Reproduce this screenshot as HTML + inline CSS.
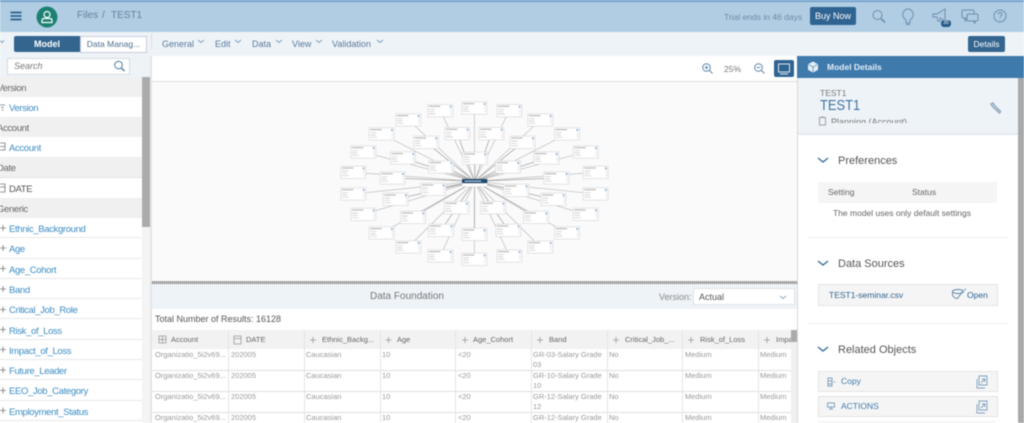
<!DOCTYPE html>
<html><head><meta charset="utf-8"><style>
html,body{margin:0;padding:0;background:#fff}
#w{position:relative;width:1024px;height:423px;overflow:hidden;font-family:"Liberation Sans",sans-serif;color:#555;filter:blur(.45px);background:#fff}
#w div,#w svg{position:absolute}
.t{white-space:nowrap;line-height:12px}
.h{left:0;width:142px;height:20px;background:#f0f0f0;border-bottom:1px solid #e2e2e2}
.h span,.i span{position:absolute;line-height:12px;font-size:9.5px;white-space:nowrap;letter-spacing:-.35px}
.h span{left:-3px;top:5.5px;color:#666}
.i{left:0;width:142px;height:19.3px;background:#fff;border-bottom:1px solid #e8e8e8}
.i span{left:9px;top:6px;color:#3d8dc4}
.m{font-size:9px;color:#5a7a99}
.c{font-size:7.5px;color:#999;line-height:10px}
.hc{font-size:7.5px;color:#666}
.v{width:1px;background:#e4e4e4}
.r{left:152px;width:639px;height:1px;background:#e0e0e0}
</style></head><body><div id="w">
<div style="left:0;top:0;width:1024px;height:32px;background:#b1cde3"></div>
<div style="left:0;top:0;width:1024px;height:1.5px;background:#6d9fcc"></div>
<svg style="left:8px;top:9px" width="16" height="14"><path d="M2.5 3.5h11M2.5 7h11M2.5 10.500h11" stroke="#2d5f8d" stroke-width="1.700"/></svg>
<svg style="left:36px;top:6px" width="22" height="22"><circle cx="11" cy="11" r="10.500" fill="#1d8172"/><circle cx="11" cy="8.500" r="3" fill="none" stroke="#fff" stroke-width="1.200"/><path d="M6 16.500v-2q0-2 2-2h6q2 0 2 2v2z" fill="none" stroke="#fff" stroke-width="1.200"/></svg>
<div class="t" style="left:77px;top:10px;font-size:10px;color:#62809c">Files</div>
<div class="t" style="left:102px;top:10px;font-size:10px;color:#62809c">/</div>
<div class="t" style="left:111px;top:10px;font-size:10px;color:#62809c">TEST1</div>
<div class="t" style="left:724px;top:11px;font-size:8.500px;color:#6f8ca8">Trial ends in 46 days</div>
<div style="left:810px;top:7px;width:46px;height:18px;background:#2f6391;border-radius:2px;color:#fff;font-size:9px;line-height:18px;text-align:center">Buy Now</div>
<svg style="left:868px;top:5px" width="150" height="24" fill="none" stroke="#6d8fae" stroke-width="1"><circle cx="9.500" cy="10" r="4.500"/><path d="M13 13.500l4 4" stroke-width="1.600"/><path d="M38 15q-4-3-3-6a5 5 0 0 1 10 0q1 3-3 6v3h-4z"/><path d="M38 19.500h4"/><path d="M65 9h4l8-5v12l-3-2-2-1v3h-2l-1-4h-4z"/><rect x="94" y="5" width="12" height="8" rx="1.500"/><path d="M97 13v3l3-3"/><rect x="99" y="9" width="11" height="7" rx="1.500" fill="#b1cde3"/><path d="M107 16v2l-2-2"/><circle cx="132" cy="11" r="6"/><path d="M130 9.500q.3-2 2-2t2 1.700q0 1-1 1.600t-1 1.500M132 14v.8"/></svg>
<div style="left:941px;top:20px;width:10px;height:6.500px;background:#265a88;border-radius:3px;color:#fff;font-size:5px;line-height:7px;text-align:center">30</div>
<div style="left:0;top:32px;width:1024px;height:24px;background:#eef3f8"></div>
<div style="left:14px;top:36px;width:66px;height:16px;background:#34658f;border-radius:2px 0 0 2px;color:#fff;font-size:9px;font-weight:bold;line-height:16px;text-align:center">Model</div>
<div style="left:80px;top:36px;width:65px;height:15px;background:#fff;border:.5px solid #ccd;color:#4d6f8f;font-size:8.500px;line-height:15px;text-align:center">Data Manag...</div>
<div style="left:151px;top:34px;width:1px;height:15px;background:#d8dee4"></div>
<div class="t m" style="left:162px;top:38px">General</div>
<div class="t m" style="left:215px;top:38px">Edit</div>
<div class="t m" style="left:252px;top:38px">Data</div>
<div class="t m" style="left:292px;top:38px">View</div>
<div class="t m" style="left:332px;top:38px">Validation</div>
<svg style="left:0;top:32px" width="400" height="24" fill="none" stroke="#7d9ab5" stroke-width=".9"><path d="M-1 8l3 2.500 2-2M198 8l3 2.500 3-2.500M235 8l3 2.500 3-2.500M276 8l3 2.500 3-2.500M316 8l3 2.500 3-2.500M377 8l3 2.500 3-2.500"/></svg>
<div style="left:968px;top:36px;width:37px;height:16px;background:#34658f;border-radius:2px;color:#fff;font-size:8.500px;line-height:16px;text-align:center">Details</div>

<div style="left:0;top:56px;width:150px;height:21px;background:#eef3f8"></div>
<div style="left:7px;top:58px;width:121px;height:15px;background:#fff;border:1px solid #d5dbe0"></div>
<div class="t" style="left:14px;top:60px;font-size:9px;font-style:italic;color:#777">Search</div>
<svg style="left:112px;top:59px" width="16" height="14" fill="none" stroke="#4b7aa5" stroke-width="1"><circle cx="6.500" cy="6" r="3.800"/><path d="M9.500 9l3 3" stroke-width="1.400"/></svg>
<div class="h" style="top:77px"><span>Version</span></div>
<div class="i" style="top:97px;height:20px"><span>Version</span></div>
<div class="h" style="top:117px"><span>Account</span></div>
<div class="i" style="top:137px;height:20px"><span>Account</span></div>
<div class="h" style="top:157px"><span>Date</span></div>
<div class="i" style="top:178px;height:20px"><span style="color:#555">DATE</span></div>
<div class="h" style="top:198px"><span>Generic</span></div>
<div class="i" style="top:218px"><span>Ethnic_Background</span></div>
<div class="i" style="top:238.300px"><span>Age</span></div>
<div class="i" style="top:258.600px"><span>Age_Cohort</span></div>
<div class="i" style="top:278.900px"><span>Band</span></div>
<div class="i" style="top:299.200px"><span>Critical_Job_Role</span></div>
<div class="i" style="top:319.500px"><span>Risk_of_Loss</span></div>
<div class="i" style="top:339.800px"><span>Impact_of_Loss</span></div>
<div class="i" style="top:360.100px"><span>Future_Leader</span></div>
<div class="i" style="top:380.400px"><span>EEO_Job_Category</span></div>
<div class="i" style="top:400.700px"><span>Employment_Status</span></div>
<svg style="left:0;top:97px" width="10" height="326" fill="none" stroke="#777" stroke-width=".8"><path d="M0 8h5M1 10.500h3M1.500 13h2M0 46h5v7h-5M0 49.500h5M0 87h5v8h-5M0 90h5"/><g transform="translate(0 5.500)"><path d="M0 125.500h6M3 122.500v6M0 145.500h6M3 142.500v6M0 166h6M3 163v6M0 186.500h6M3 183.500v6M0 207h6M3 204v6M0 227h6M3 224v6M0 247h6M3 244v6M0 267.500h6M3 264.500v6M0 288h6M3 285v6M0 308h6M3 305v6"/></g></svg>
<div style="left:142px;top:77px;width:8px;height:150px;background:#ababab"></div>
<div style="left:142px;top:227px;width:8px;height:196px;background:#f4f4f4"></div>
<div style="left:150px;top:56px;width:2px;height:367px;background:#e3e6e9"></div>

<div style="left:152px;top:81px;width:645px;height:1px;background:#dcdcdc"></div>
<div style="left:152px;top:82px;width:645px;height:198px;background:#fafafa"></div>
<svg style="left:700px;top:60px" width="70" height="16" fill="none" stroke="#5b86ab" stroke-width="1"><circle cx="6.500" cy="7.500" r="3.800"/><path d="M9.500 10.500l3 3M4.800 7.500h3.400M6.500 5.800v3.400"/><circle cx="58.500" cy="7.500" r="3.800"/><path d="M61.500 10.500l3 3M56.800 7.500h3.400"/></svg>
<div class="t" style="left:724px;top:63px;font-size:8.500px;color:#777">25%</div>
<div style="left:774px;top:60px;width:20px;height:17px;background:#2f6391;border-radius:2px"></div>
<svg style="left:774px;top:60px" width="20" height="17" fill="none" stroke="#dfe8f0" stroke-width="1"><rect x="4.500" y="4" width="11" height="8"/><path d="M6 14h8"/></svg>

<svg style="left:330px;top:90px" width="300" height="190" viewBox="0 0 900 570">
<defs><g id="b"><rect x=".5" y=".5" width="75" height="37" fill="#fff" stroke="#d8d8d8" stroke-width="2"/><rect x="4" y="4" width="34" height="4" fill="#c0c0c0"/><rect x="66" y="4" width="6" height="6" fill="#9dbbd6"/><path d="M4 15h18M4 22h16M4 29h20M68 15h4M68 22h4M68 29h4" stroke="#c4c4c4" stroke-width="2"/></g></defs>
<g stroke="#b4b4b4" stroke-width="1.800" fill="none">
<path d="M434 274L433 54M434 274L331 62M434 274L538 62M434 274L235 90M434 274L631 90M434 274L155 132M434 274L711 132M434 274L100 186M434 274L767 186M434 274L70 247M434 274L797 247M434 274L70 312M434 274L797 312M434 274L100 373M434 274L767 373M434 274L155 429M434 274L711 429M434 274L235 471M434 274L631 471M434 274L331 498M434 274L538 498M434 274L433 508"/>
</g>
<g stroke="#a4a4a4" stroke-width="2.200" fill="none"><path d="M434 274L382 131M434 274L484 131M434 274L288 157M434 274L578 157M434 274L219 204M434 274L649 204M434 274L188 264M434 274L679 264M434 274L197 328M434 274L670 328M434 274L249 382M434 274L618 382M434 274L333 421M434 274L535 421M434 274L433 433M434 274L380 353M434 274L489 353M434 274L310 298M434 274L559 301M434 274L333 231M434 274L534 231M434 274L435 205"/></g>
<use href="#b" x="395" y="35"/><use href="#b" x="293" y="43"/><use href="#b" x="500" y="43"/><use href="#b" x="197" y="71"/><use href="#b" x="593" y="71"/><use href="#b" x="117" y="113"/><use href="#b" x="673" y="113"/><use href="#b" x="62" y="167"/><use href="#b" x="729" y="167"/><use href="#b" x="32" y="228"/><use href="#b" x="759" y="228"/><use href="#b" x="32" y="293"/><use href="#b" x="759" y="293"/><use href="#b" x="62" y="354"/><use href="#b" x="729" y="354"/><use href="#b" x="117" y="410"/><use href="#b" x="673" y="410"/><use href="#b" x="197" y="452"/><use href="#b" x="593" y="452"/><use href="#b" x="293" y="479"/><use href="#b" x="500" y="479"/><use href="#b" x="395" y="489"/>
<use href="#b" x="344" y="112"/><use href="#b" x="446" y="112"/><use href="#b" x="250" y="138"/><use href="#b" x="540" y="138"/><use href="#b" x="181" y="185"/><use href="#b" x="611" y="185"/><use href="#b" x="150" y="245"/><use href="#b" x="641" y="245"/><use href="#b" x="159" y="309"/><use href="#b" x="632" y="309"/><use href="#b" x="211" y="363"/><use href="#b" x="580" y="363"/><use href="#b" x="295" y="402"/><use href="#b" x="497" y="402"/><use href="#b" x="395" y="414"/><use href="#b" x="342" y="334"/><use href="#b" x="451" y="334"/><use href="#b" x="272" y="279"/><use href="#b" x="521" y="282"/><use href="#b" x="295" y="212"/><use href="#b" x="496" y="212"/><use href="#b" x="397" y="186"/>
<rect x="396" y="267" width="76" height="13" fill="#1f4a6e"/><rect x="396" y="280" width="76" height="10" fill="#fff" stroke="#ccc"/><rect x="404" y="272" width="50" height="3" fill="#cfdbe6"/>
</svg>

<div style="left:152px;top:281px;width:645px;height:3px;background:repeating-linear-gradient(90deg,#888 0 1px,#ccc 1px 2px)"></div>
<div style="left:152px;top:284px;width:645px;height:25px;background:#eef3f8"></div>
<div class="t" style="left:370px;top:290.500px;font-size:10px;color:#777">Data Foundation</div>
<div class="t" style="left:659px;top:291px;font-size:9px;color:#888">Version:</div>
<div style="left:693px;top:288px;width:100px;height:15px;background:#fff;border:1px solid #dde2e6"></div>
<div class="t" style="left:699px;top:291px;font-size:9px;color:#555">Actual</div>
<svg style="left:778px;top:292px" width="12" height="10" fill="none" stroke="#8aa5bd"><path d="M2 4l3 2.500 3-2.500"/></svg>
<div class="t" style="left:155px;top:313px;font-size:9px;color:#555">Total Number of Results: 16128</div>
<div style="left:152px;top:330px;width:639px;height:19px;background:#f2f2f2"></div>
<div class="t hc" style="left:171px;top:334px">Account</div>
<div class="t hc" style="left:246px;top:334px">DATE</div>
<div class="t hc" style="left:322px;top:334px">Ethnic_Backg...</div>
<div class="t hc" style="left:397px;top:334px">Age</div>
<div class="t hc" style="left:473px;top:334px">Age_Cohort</div>
<div class="t hc" style="left:549px;top:334px">Band</div>
<div class="t hc" style="left:625px;top:334px">Critical_Job_...</div>
<div class="t hc" style="left:700px;top:334px">Risk_of_Loss</div>
<div class="t hc" style="left:776px;top:334px;width:15px;overflow:hidden">Impact</div>
<svg style="left:152px;top:330px" width="640" height="19" fill="none" stroke="#999" stroke-width=".8"><path d="M7 6h7v7h-7zM10.500 6v7M7 9.500h7M82 6h7v8h-7zM82 8.500h7M158 10h6M161 7v6M233.500 10h6M236.500 7v6M310 10h6M313 7v6M385 10h6M388 7v6M461 10h6M464 7v6M536 10h6M539 7v6M612 10h6M615 7v6"/></svg>
<div class="r" style="top:369.500px"></div><div class="r" style="top:390.500px"></div><div class="r" style="top:411.500px"></div>
<div class="v" style="left:228px;top:330px;height:93px"></div><div class="v" style="left:304px;top:330px;height:93px"></div><div class="v" style="left:380px;top:330px;height:93px"></div><div class="v" style="left:455px;top:330px;height:93px"></div><div class="v" style="left:531px;top:330px;height:93px"></div><div class="v" style="left:607px;top:330px;height:93px"></div><div class="v" style="left:682px;top:330px;height:93px"></div><div class="v" style="left:758px;top:330px;height:93px"></div>

<div class="t c" style="left:155px;top:350px">Organizatio_5i2v69...</div><div class="t c" style="left:231px;top:350px">202005</div><div class="t c" style="left:306px;top:350px">Caucasian</div><div class="t c" style="left:382px;top:350px">10</div><div class="t c" style="left:458px;top:350px">&lt;20</div><div class="t c" style="left:533px;top:350px">GR-03-Salary Grade<br>03</div><div class="t c" style="left:609px;top:350px">No</div><div class="t c" style="left:685px;top:350px">Medium</div><div class="t c" style="left:760px;top:350px">Medium</div>
<div class="t c" style="left:155px;top:371px">Organizatio_5i2v69...</div><div class="t c" style="left:231px;top:371px">202005</div><div class="t c" style="left:306px;top:371px">Caucasian</div><div class="t c" style="left:382px;top:371px">10</div><div class="t c" style="left:458px;top:371px">&lt;20</div><div class="t c" style="left:533px;top:371px">GR-10-Salary Grade<br>10</div><div class="t c" style="left:609px;top:371px">No</div><div class="t c" style="left:685px;top:371px">Medium</div><div class="t c" style="left:760px;top:371px">Medium</div>
<div class="t c" style="left:155px;top:392px">Organizatio_5i2v69...</div><div class="t c" style="left:231px;top:392px">202005</div><div class="t c" style="left:306px;top:392px">Caucasian</div><div class="t c" style="left:382px;top:392px">10</div><div class="t c" style="left:458px;top:392px">&lt;20</div><div class="t c" style="left:533px;top:392px">GR-12-Salary Grade<br>12</div><div class="t c" style="left:609px;top:392px">No</div><div class="t c" style="left:685px;top:392px">Medium</div><div class="t c" style="left:760px;top:392px">Medium</div>
<div class="t c" style="left:155px;top:413px">Organizatio_5i2v69...</div><div class="t c" style="left:231px;top:413px">202005</div><div class="t c" style="left:306px;top:413px">Caucasian</div><div class="t c" style="left:382px;top:413px">10</div><div class="t c" style="left:458px;top:413px">&lt;20</div><div class="t c" style="left:533px;top:413px">GR-12-Salary Grade</div><div class="t c" style="left:609px;top:413px">No</div><div class="t c" style="left:685px;top:413px">Medium</div><div class="t c" style="left:760px;top:413px">Medium</div>
<div style="left:791px;top:330px;width:6px;height:93px;background:#f0f0f0"></div>
<div style="left:791px;top:330px;width:6px;height:12px;background:#aaa"></div>

<div style="left:797px;top:56px;width:227px;height:367px;background:#fff;border-left:1px solid #d8d8d8;box-sizing:border-box"></div>
<div style="left:797px;top:56px;width:227px;height:22px;background:#3f7aad"></div>
<svg style="left:806px;top:60px" width="14" height="14"><path d="M7 1.500l5 2.800v5.500l-5 2.800-5-2.800V4.300z" fill="#e6eef5"/><path d="M7 7v5M2.500 4.500L7 7l4.500-2.500" stroke="#3f7aad" stroke-width=".7" fill="none"/></svg>
<div class="t" style="left:827px;top:61px;font-size:8.500px;font-weight:bold;color:#e3edf5">Model Details</div>
<div style="left:798px;top:78px;width:220px;height:55px;background:#eef3f8;overflow:hidden"></div>
<div style="left:798px;top:133px;width:220px;height:2px;background:#e3eaf1"></div>
<div class="t" style="left:820px;top:87px;font-size:8.500px;color:#777">TEST1</div>
<div class="t" style="left:820px;top:98px;font-size:15px;line-height:15px;color:#3f72a0;transform:scaleX(.86);transform-origin:0 0">TEST1</div>
<div style="left:818px;top:115px;width:120px;height:8px;overflow:hidden"><div class="t" style="left:13px;top:1.500px;font-size:9px;color:#777;line-height:10px">Planning (Account)</div></div>
<svg style="left:818px;top:116px" width="10" height="10" fill="none" stroke="#999" stroke-width=".9"><rect x="1.500" y="1.500" width="6" height="7.500"/><path d="M3 1h3"/></svg>
<svg style="left:989px;top:101px" width="14" height="14" fill="none" stroke="#8fa9c0" stroke-width="1.500"><path d="M2 3l2-1 1.500 2.500 6 6-1 1.500-6.500-6z"/></svg>
<div style="left:1018px;top:78px;width:6px;height:345px;background:#a9a9a9"></div>

<svg style="left:815px;top:151px" width="20" height="280" fill="none" stroke="#356a98" stroke-width="1.300"><path d="M3 7l5 4 5-4M3 110l5 4 5-4M3 196l5 4 5-4"/></svg>
<div class="t" style="left:838px;top:155px;font-size:11px;color:#555">Preferences</div>
<div style="left:818px;top:182px;width:179px;height:21px;background:#f5f5f5"></div>
<div class="t" style="left:828px;top:186px;font-size:8.500px;color:#666">Setting</div>
<div class="t" style="left:912px;top:186px;font-size:8.500px;color:#666">Status</div>
<div class="t" style="left:833px;top:207px;font-size:8.500px;color:#666">The model uses only default settings</div>
<div style="left:808px;top:237px;width:200px;height:1px;background:#eee"></div>
<div class="t" style="left:838px;top:258px;font-size:11px;color:#555">Data Sources</div>
<div style="left:818px;top:284px;width:178px;height:20px;background:#f5f5f5;border:.5px solid #e4e4e4"></div>
<div class="t" style="left:829px;top:289px;font-size:8.500px;color:#2f6391">TEST1-seminar.csv</div>
<svg style="left:951px;top:288px" width="16" height="13" fill="none" stroke="#5b86ab" stroke-width=".9"><ellipse cx="7" cy="3.500" rx="5.500" ry="2"/><path d="M1.500 3.500v4q2 3 5 3l5-7M13 2l2-1"/></svg>
<div class="t" style="left:967px;top:289px;font-size:8.500px;color:#2f6391">Open</div>
<div style="left:808px;top:323px;width:200px;height:1px;background:#eee"></div>
<div class="t" style="left:838px;top:344px;font-size:11px;color:#555">Related Objects</div>
<div style="left:818px;top:371px;width:178px;height:19px;background:#f5f5f5;border:.5px solid #e4e4e4"></div>
<div class="t" style="left:841px;top:375px;font-size:8.500px;color:#3f7aad">Copy</div>
<div style="left:818px;top:396px;width:178px;height:19px;background:#f5f5f5;border:.5px solid #e4e4e4"></div>
<div class="t" style="left:841px;top:400px;font-size:8.500px;color:#3f7aad">ACTIONS</div>
<div style="left:818px;top:421px;width:178px;height:2px;background:#f5f5f5"></div>
<svg style="left:818px;top:371px" width="180" height="45" fill="none" stroke="#7d9fbd" stroke-width=".9"><path d="M10 7h4v8h-4zM10 10h4M10 13h4M15.500 11h1.500M9.500 32h7v4h-7zM13 36v2M11 38h4"/><path d="M159 8v9h8M161 5h8v9h-8zM163 12l4-4M164 8h3v3M159 33v9h8M161 30h8v9h-8zM163 37l4-4M164 33h3v3"/></svg>
</div></body></html>
